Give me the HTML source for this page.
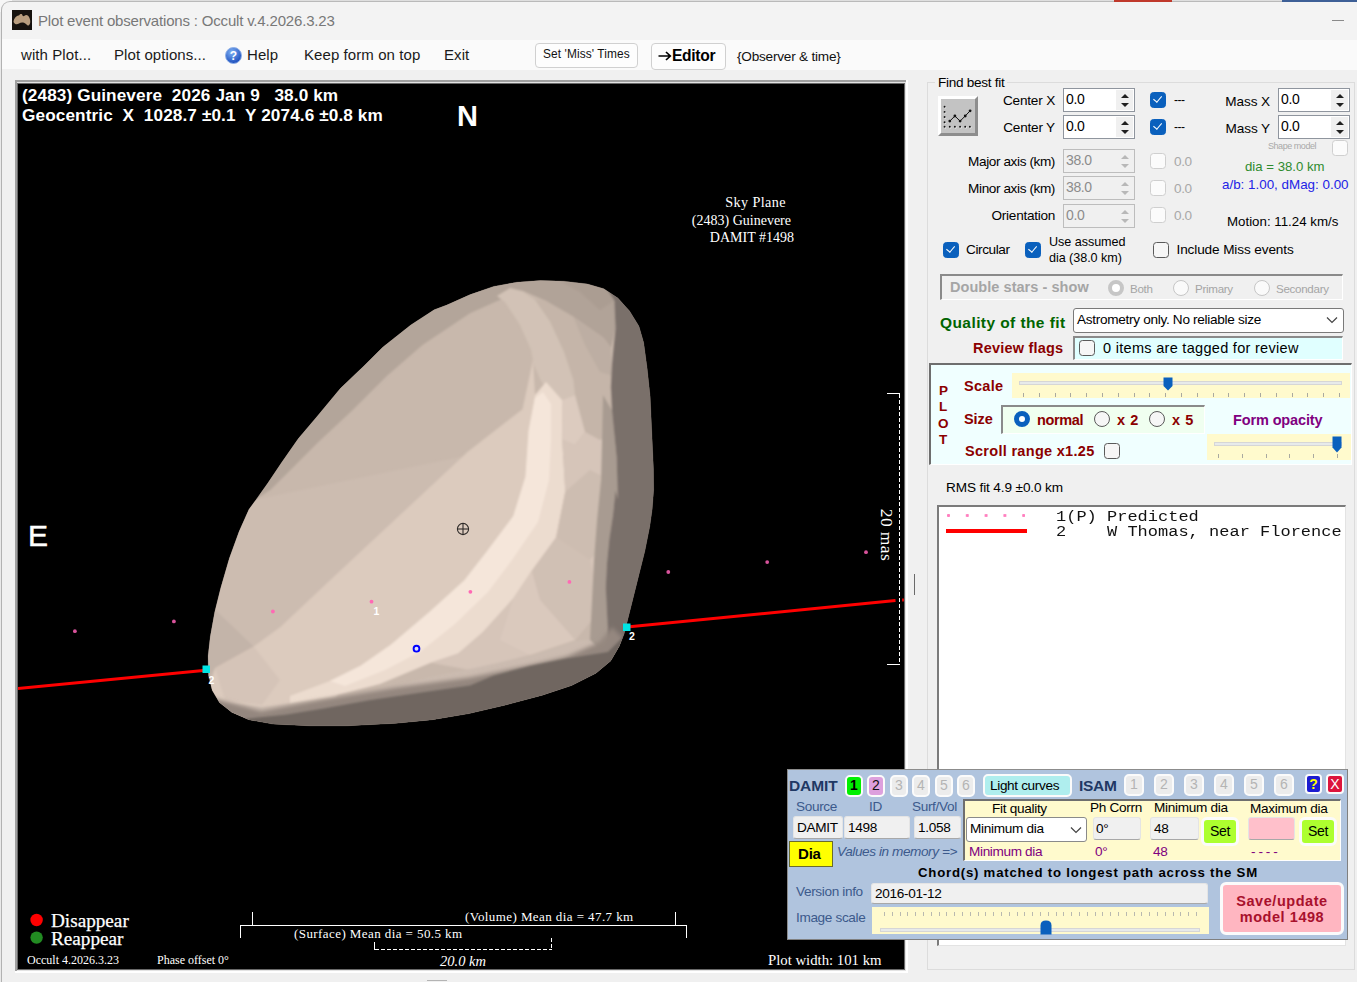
<!DOCTYPE html>
<html>
<head>
<meta charset="utf-8">
<title>Plot event observations</title>
<style>
html,body{margin:0;padding:0;}
body{width:1357px;height:982px;overflow:hidden;position:relative;background:#f0f0f0;font-family:"Liberation Sans",sans-serif;font-size:14px;color:#000;}
.a{position:absolute;white-space:nowrap;}
.t{position:absolute;white-space:nowrap;line-height:1;}
#titlebar{left:0;top:0;width:1357px;height:40px;background:#f3f3f3;}
#menubar{left:0;top:40px;width:1357px;height:30px;background:#fafafa;}
.menu{font-size:15px;color:#1a1a1a;top:47px;letter-spacing:0.08px;}
#plot{left:18px;top:84px;width:886px;height:885px;background:#000;overflow:hidden;}
.ser{font-family:"Liberation Serif",serif;color:#fff;}
.spin{background:#fff;border:1px solid #7a7a7a;box-sizing:border-box;height:24px;}
.spin.dis{background:#f0f0f0;border-color:#c4c4c4;color:#8a8a8a;}
.cb{width:13px;height:13px;border:1px solid #444;border-radius:3px;background:#fff;box-sizing:content-box;}
.cb.on{background:#0a5fb8;border-color:#0a5fb8;}
.cb.dis{border-color:#c8c8c8;background:#fafafa;}
.lbl{font-size:14px;letter-spacing:-0.3px;}
</style>
</head>
<body>
<!-- ===== window chrome ===== -->
<div class="a" id="titlebar"></div>
<div class="a" id="menubar"></div>
<!-- CHROME-BEGIN -->
<div class="a" style="left:0;top:0;width:1357px;height:2px;background:#b9b9b9;"></div>
<div class="a" style="left:0;top:0;width:1357px;height:1px;background:#dedede;"></div>
<div class="a" style="left:1114px;top:0;width:58px;height:2px;background:#c0392b;"></div>
<div class="a" style="left:1282px;top:0;width:75px;height:2px;background:#3d5f96;"></div>
<div class="a" style="left:0;top:0;width:12px;height:12px;background:#f6f6f6;"></div><div class="a" style="left:0;top:12px;width:2px;height:970px;background:#e9e9e9;"></div>
<div class="a" style="left:1px;top:1px;width:40px;height:990px;box-sizing:border-box;border-left:1.5px solid #b2b2b2;border-top:1.5px solid #b9b9b9;border-radius:9px 0 0 0;background:linear-gradient(#f3f3f3 0,#f3f3f3 37.5px,#fafafa 37.5px,#fafafa 67.5px,#f0f0f0 67.5px);"></div>
<!-- app icon -->
<svg class="a" style="left:12px;top:10px;" width="20" height="20" viewBox="0 0 20 20"><rect width="20" height="20" fill="#16120e"/><path d="M1.5 12 C2 8 4.5 5.5 7 5.5 C8.5 3.5 10 3.8 10.5 5.5 C11 6.5 11.8 6.5 12.5 5.8 C14 4.2 16.5 5 17.5 8 C18.8 11 18.5 14.5 16.5 15.5 C15 15.8 14 13.5 12 12.8 C10 12 8.5 12.5 7 13.5 C5 14.8 3 14.8 1.5 12 Z" fill="#b89d7e"/></svg>
<div class="t" style="left:38px;top:13px;font-size:15px;color:#787878;letter-spacing:-0.18px;">Plot event observations : Occult v.4.2026.3.23</div>
<div class="a" style="left:1332px;top:20px;width:12px;height:1px;background:#8a8a8a;"></div>
<!-- menu -->
<div class="t menu" style="left:21px;">with Plot...</div>
<div class="t menu" style="left:114px;">Plot options...</div>
<svg class="a" style="left:225px;top:47px;" width="17" height="17" viewBox="0 0 17 17"><defs><radialGradient id="hg" cx="40%" cy="30%" r="75%"><stop offset="0" stop-color="#7fb2f5"/><stop offset="1" stop-color="#1546b8"/></radialGradient></defs><circle cx="8.5" cy="8.5" r="8" fill="url(#hg)" stroke="#8fb0e8" stroke-width="1"/><text x="8.5" y="12.8" font-family="Liberation Sans" font-weight="bold" font-size="12" fill="#fff" text-anchor="middle">?</text></svg>
<div class="t menu" style="left:247px;">Help</div>
<div class="t menu" style="left:304px;">Keep form on top</div>
<div class="t menu" style="left:444px;">Exit</div>
<!-- buttons -->
<div class="a" style="left:535px;top:43px;width:101px;height:23px;border:1px solid #d0d0d0;border-radius:4px;background:#fdfdfd;box-sizing:content-box;"></div>
<div class="t" style="left:543px;top:49px;font-size:11.9px;color:#111;letter-spacing:0.1px;">Set 'Miss' Times</div>
<div class="a" style="left:651px;top:43px;width:73px;height:25px;border:1px solid #d0d0d0;border-radius:4px;background:#fdfdfd;box-sizing:content-box;"></div>
<svg class="a" style="left:658px;top:50px;" width="14" height="12" viewBox="0 0 14 12"><path d="M0.5 6 H12 M8 2 L12.3 6 L8 10" stroke="#000" stroke-width="1.7" fill="none"/></svg><div class="t" style="left:672px;top:48px;font-size:15.6px;font-weight:bold;color:#000;letter-spacing:-0.3px;">Editor</div>
<div class="t" style="left:737px;top:50px;font-size:13.6px;color:#111;letter-spacing:-0.22px;">{Observer &amp; time}</div>
<div class="a" style="left:427px;top:980px;width:20px;height:1px;background:#b4b4b4;"></div>
<!-- CHROME-END -->
<!-- ===== plot ===== -->
<div class="a" style="left:15px;top:80px;width:893px;height:893px;background:#fff;"></div>
<div class="a" style="left:15px;top:80px;width:891px;height:891px;background:#a0a0a0;"></div>
<div class="a" style="left:17px;top:82px;width:889px;height:889px;background:#e3e3e3;"></div>
<div class="a" style="left:17px;top:83px;width:888px;height:887px;background:#696969;"></div>
<div class="a" id="plot">
<!-- PLOT-BEGIN -->
<svg class="a" style="left:-18px;top:-84px;" width="1357" height="982" viewBox="0 0 1357 982">
<defs>
<clipPath id="ast"><path d="M540.5 280.5 L563.9 281.2 L587.4 284 L603.7 288.7 L617.8 298.1 L629.5 311 L638.9 326.2 L643.6 342.6 L647.1 368.4 L650.1 396.5 L651.8 433.9 L653.4 469 L653.6 490 L652.1 509.5 L649.7 526.6 L644.8 551.1 L638.7 575.5 L632.6 599.9 L627.7 619.5 L624 634.1 L619.1 646.4 L610.6 661 L595.9 673.2 L571.5 685.5 L542.2 695.2 L505.5 705 L468.9 713.6 L432.2 719.7 L395.5 723.3 L346.6 725.8 L309.9 725.8 L273.3 724.1 L248.9 719.7 L231.8 712.3 L219.5 702.6 L212.2 690.3 L208.6 675.7 L208.1 656.1 L210.3 636.6 L214.7 612.2 L220.8 587.7 L229.3 558.4 L239.1 531.5 L248.9 509.5 L256.2 499.5 L267.9 483.1 L282 462 L298.4 438.6 L317.1 416.4 L340.5 388.3 L363.9 366 L382.7 347.3 L410.8 325 L434.2 309.8 L446.8 305.1 L470.3 294.6 L493.7 286.4 L517.1 282.2 Z"/></clipPath>
<filter id="bl" x="-5%" y="-5%" width="110%" height="110%"><feGaussianBlur stdDeviation="0.9"/></filter>
<filter id="bl2" x="-5%" y="-5%" width="110%" height="110%"><feGaussianBlur stdDeviation="2.2"/></filter>
</defs>
<!-- asteroid -->
<path d="M540.5 280.5 L563.9 281.2 L587.4 284 L603.7 288.7 L617.8 298.1 L629.5 311 L638.9 326.2 L643.6 342.6 L647.1 368.4 L650.1 396.5 L651.8 433.9 L653.4 469 L653.6 490 L652.1 509.5 L649.7 526.6 L644.8 551.1 L638.7 575.5 L632.6 599.9 L627.7 619.5 L624 634.1 L619.1 646.4 L610.6 661 L595.9 673.2 L571.5 685.5 L542.2 695.2 L505.5 705 L468.9 713.6 L432.2 719.7 L395.5 723.3 L346.6 725.8 L309.9 725.8 L273.3 724.1 L248.9 719.7 L231.8 712.3 L219.5 702.6 L212.2 690.3 L208.6 675.7 L208.1 656.1 L210.3 636.6 L214.7 612.2 L220.8 587.7 L229.3 558.4 L239.1 531.5 L248.9 509.5 L256.2 499.5 L267.9 483.1 L282 462 L298.4 438.6 L317.1 416.4 L340.5 388.3 L363.9 366 L382.7 347.3 L410.8 325 L434.2 309.8 L446.8 305.1 L470.3 294.6 L493.7 286.4 L517.1 282.2 Z" fill="#c8b8ac" stroke="#5a524c" stroke-width="1" stroke-opacity="0.5"/>
<g clip-path="url(#ast)">
 <g filter="url(#bl)">
  <!-- upper-left edge strip -->
  <polygon points="200,520 256,499 270.3,490 293.7,466.7 317.1,443.3 352.2,410.5 387.4,375.4 422.5,345 470,313.3 520,291 560,286 560,270 200,270" fill="#b3a59a"/>
  <!-- slightly lighter lower part of main facet -->
  <polygon points="200,512 256,499.5 470,455 522,410 467.5,451.9 421.7,494.7 375.8,537.5 330,580.3 280.6,626.8 253.7,646.4 200,660" fill="#ccbcb0"/>
  <!-- top-right medium area R1 -->
  <polygon points="500,290 517,283 540.5,279 587.4,282 606,286 614.3,300.4 615.5,328.5 611,348 603.7,337.9 573.3,316.8 545.2,300.4 521,290" fill="#b1a398"/>
  <polygon points="560,281 587.4,282 606,286 614.3,300.4 600,310 580,292" fill="#ab9d92"/>
  <!-- R2 -->
  <polygon points="535,300 545.2,300.4 573.3,316.8 603.7,337.9 611,348 612,375.4 611,395 614.3,433.9 600,440 585,432 575,395 573.3,380 564,352 550,321.5" fill="#c5b5a9"/>
  <polygon points="573.3,316.8 603.7,337.9 611,348 612,375.4 600,372 585,345" fill="#bdaea3"/>
  <!-- R3 ridge -->
  <polygon points="497,296 510,288 521.8,291 535,300 550,321.5 564,352 573.3,380 575,395 562,400 548,392 540.5,380 533.5,363.7 531,349.6 520,325 505,302" fill="#d2c2b6"/>
  <!-- light band -->
  <polygon points="522.5,409.2 467.5,451.9 421.7,494.7 375.8,537.5 330,580.3 280.6,626.8 253.7,646.4 215,668 205,700 260,720 330,705 360.6,665.8 391.1,644.4 430.8,610.8 464.4,580.3 485.8,552.8 513.3,516.1 525.5,476.4 528.6,430.6 535,395 533,360" fill="#dccbbe"/>
  <!-- lightest band (outer, softer) -->
  <polygon points="546,382 562,400 562.2,439.7 565.3,491.7 556.1,537.5 531.7,571.1 513.3,598.6 482.8,632.2 458.3,653.6 430.8,662.8 380,684 330,697 290,703 290,696 330,681.1 360.6,665.8 391.1,644.4 430.8,610.8 464.4,580.3 485.8,552.8 513.3,516.1 525.5,476.4 528.6,430.6 535,395" fill="#ecdccf"/>
  <!-- core -->
  <polygon points="543,392 551,404 551,440 549,480 538,522 512,560 488,592 455,624 420,652 385,670 345,686 330,681.1 360.6,665.8 391.1,644.4 430.8,610.8 464.4,580.3 485.8,552.8 513.3,516.1 525.5,476.4 528.6,430.6 535,398" fill="#f5e6da"/>
  <polygon points="562,400 575,395 585,432 575,445 562.2,439.7" fill="#dccbbf"/>
  <!-- right of lightest -->
  <polygon points="562.2,439.7 565.3,491.7 556.1,537.5 531.7,571.1 513.3,598.6 482.8,632.2 458.3,653.6 430.8,662.8 470,670 530,655 575,640 600,610 606,565 609,538 613,514 615.5,490 616.6,457.4 614.3,433.9 600,440 585,432 575,445" fill="#d6c5b9"/>
  <polygon points="565.3,491.7 590,470 610,480 609,538 590,560 556.1,537.5" fill="#cdbdb1"/>
  <polygon points="531.7,571.1 556.1,537.5 590,560 600,610 575,640 540,600" fill="#d0c0b4"/>
  <polygon points="513.3,598.6 531.7,571.1 540,600 575,640 530,655 500,640" fill="#dac9bd"/>
  <!-- strip before the dark facet -->
  <polygon points="603,395 612,410.5 614.3,433.9 616.6,457.4 617.8,499.5 615.5,490 613,514.4 609.3,538.9 606.9,563.3 605.7,587.7 606.9,612.2 608.1,636.6 600,650 590,640 592,600 594,560 597,520 601,480 602,440" fill="#a89b91"/>
  <!-- dark right facet -->
  <polygon points="606,287.6 614.3,300.4 615.5,328.5 612,363.7 610.8,387.1 612,410.5 614.3,433.9 616.6,457.4 617.8,499.5 615.5,490 613,514.4 609.3,538.9 606.9,563.3 605.7,587.7 606.9,612.2 608.1,636.6 606.9,656.1 620,670 670,640 670,280" fill="#7a706a"/>
  <!-- lower-left corner facets -->
  <polygon points="205,600 253.7,646.4 215,668 200,690" fill="#c3b4a9"/>
  <polygon points="215,668 253.7,646.4 280,680 262,705 225,700" fill="#d5c4b8"/>
  <polygon points="225,703 262,707 330,699 380,690 430.8,677 470,669 530,656 575,641 590,640 600,650 560,668 500,680 440,690 380,702 320,712 260,722 230,715" fill="#cbbbb0"/>
 </g>
 <g filter="url(#bl2)">
  <!-- bottom medium band -->
  <polygon points="205,696 261.1,711 322.2,699.5 395.5,687.5 470,677.5 530,665 566.6,656.6 600,642 612,627 625,640 600,690 400,740 200,740" fill="#94877f"/>
 </g>
 <g filter="url(#bl)">
  <!-- bottom dark -->
  <polygon points="225,722 248.9,718.4 285.5,714.8 322.2,708.7 371,700.1 419.9,692.8 470,685.5 493.3,675.7 530,666 566.6,658.6 608,652 640,620 660,700 400,740 220,740" fill="#6f6660"/>
 </g>
</g>
</svg>
<!-- PLOT2-BEGIN -->
<svg class="a" style="left:-18px;top:-84px;" width="1357" height="982" viewBox="0 0 1357 982">
<!-- chord 2 -->
<line x1="17" y1="688.6" x2="206" y2="670.2" stroke="#f00" stroke-width="3"/>
<line x1="627" y1="627" x2="895.5" y2="600.6" stroke="#f00" stroke-width="3"/>
<rect x="902" y="598.5" width="3" height="3" fill="#d00000"/>
<rect x="202.5" y="665.5" width="7.5" height="7.5" fill="#00e5e5"/>
<rect x="623" y="623.5" width="7.5" height="7.5" fill="#00e5e5"/>
<!-- predicted dots -->
<g fill="#d9539c">
<circle cx="74.9" cy="631.2" r="1.9"/><circle cx="173.9" cy="621.4" r="1.9"/>
<circle cx="668.3" cy="572" r="1.9"/><circle cx="767.2" cy="562.1" r="1.9"/><circle cx="866" cy="552.2" r="1.9"/>
</g>
<g fill="#ff69b4">
<circle cx="272.9" cy="611.5" r="1.9"/><circle cx="371.5" cy="601.7" r="1.9"/><circle cx="470.4" cy="591.8" r="1.9"/><circle cx="569.4" cy="581.9" r="1.9"/>
</g>
<!-- centre cross -->
<g stroke="#2e2a28" stroke-width="1.1" fill="none"><circle cx="463" cy="529" r="5.6"/><line x1="457" y1="529" x2="469" y2="529"/><line x1="463" y1="523" x2="463" y2="535"/></g>
<!-- blue circle -->
<circle cx="416.5" cy="648.7" r="2.9" fill="#dfe0ff" stroke="#0000ff" stroke-width="1.9"/>
<!-- 20 mas bar -->
<g stroke="#fff" stroke-width="1" fill="none" shape-rendering="crispEdges">
<line x1="887" y1="393.5" x2="900" y2="393.5"/><line x1="887" y1="664.5" x2="900" y2="664.5"/>
<line x1="899.5" y1="394" x2="899.5" y2="664" stroke-dasharray="4 2"/>
<!-- bottom brackets -->
<line x1="240" y1="925.5" x2="687" y2="925.5"/>
<line x1="240.5" y1="925" x2="240.5" y2="938"/><line x1="686.5" y1="925" x2="686.5" y2="938"/>
<line x1="252.5" y1="912" x2="252.5" y2="925"/><line x1="675.5" y1="912" x2="675.5" y2="925"/>
<line x1="374.5" y1="949.5" x2="552" y2="949.5" stroke-dasharray="4 2"/>
<line x1="374.5" y1="942" x2="374.5" y2="950"/><line x1="551.5" y1="938" x2="551.5" y2="950" stroke-dasharray="4 2"/>
</g>
<circle cx="36.6" cy="920" r="6.2" fill="#f00"/>
<circle cx="36.6" cy="937.6" r="6.2" fill="#228b22"/>
</svg>
<!-- texts: coordinates are plot-local (source minus 18,84) -->
<div class="t" style="left:4px;top:3px;font-size:17.2px;font-weight:bold;color:#fff;letter-spacing:0.1px;white-space:pre;">(2483) Guinevere  2026 Jan 9   38.0 km</div>
<div class="t" style="left:4px;top:23px;font-size:17.2px;font-weight:bold;color:#fff;letter-spacing:0.1px;white-space:pre;">Geocentric  X  1028.7 &#177;0.1  Y 2074.6 &#177;0.8 km</div>
<div class="t" style="left:439px;top:18px;font-size:29px;font-weight:bold;color:#fff;">N</div>
<div class="t" style="left:10px;top:437px;font-size:30px;color:#fff;-webkit-text-stroke:0.5px #fff;">E</div>
<div class="t ser" style="right:118px;top:111px;font-size:14.2px;letter-spacing:0.4px;">Sky Plane</div>
<div class="t ser" style="right:113px;top:130px;font-size:14px;">(2483) Guinevere</div>
<div class="t ser" style="right:110px;top:147px;font-size:14px;">DAMIT #1498</div>
<div class="t ser" style="left:867.5px;top:451px;font-size:17.5px;letter-spacing:0.4px;transform:translate(-50%,-50%) rotate(90deg);">20 mas</div>
<div class="t" style="left:190.5px;top:591px;font-size:10.5px;font-weight:bold;color:#fff;">2</div>
<div class="t" style="left:611px;top:547px;font-size:10.5px;font-weight:bold;color:#fff;">2</div>
<div class="t" style="left:355.5px;top:522px;font-size:10.5px;font-weight:bold;color:#fff;">1</div>
<div class="t ser" style="left:33px;top:827px;font-size:19.2px;-webkit-text-stroke:0.25px #fff;">Disappear</div>
<div class="t ser" style="left:33px;top:845px;font-size:19.2px;-webkit-text-stroke:0.25px #fff;">Reappear</div>
<div class="t ser" style="left:9px;top:870px;font-size:12px;">Occult 4.2026.3.23</div>
<div class="t ser" style="left:139px;top:870px;font-size:12px;">Phase offset 0&#176;</div>
<div class="t ser" style="left:447px;top:826px;font-size:13px;letter-spacing:0.42px;">(Volume) Mean dia = 47.7 km</div>
<div class="t ser" style="left:276px;top:843px;font-size:13px;letter-spacing:0.42px;">(Surface) Mean dia = 50.5 km</div>
<div class="t ser" style="left:422px;top:870px;font-size:14.5px;font-style:italic;">20.0 km</div>
<div class="t ser" style="left:750px;top:869px;font-size:14.75px;">Plot width: 101 km</div>
<!-- PLOT2-END -->
<!-- PLOT-END -->
</div>
<!-- ===== right panel ===== -->
<!-- RIGHT-BEGIN -->
<style>
.gl{font-size:13.6px;letter-spacing:-0.4px;color:#000;}
.sb{position:absolute;box-sizing:border-box;height:24px;width:72px;background:#fff;border:1px solid #8f959e;}
.sb.dis{background:#f0f0f0;border-color:#bdbdbd;}
.sb .v{position:absolute;left:2px;top:3px;font-size:14px;letter-spacing:-0.4px;line-height:1;}
.sb.dis .v{color:#8c8c8c;}
.sb .ud{position:absolute;right:1px;top:1px;width:17px;height:20px;background:#f0f0f0;}
.sb .ud:before,.sb .ud:after{content:"";position:absolute;left:4.5px;border-left:4px solid transparent;border-right:4px solid transparent;}
.sb .ud:before{top:4px;border-bottom:4px solid #202020;}
.sb .ud:after{top:13px;border-top:4px solid #202020;}
.sb.dis .ud:before{border-bottom-color:#b8b8b8;}
.sb.dis .ud:after{border-top-color:#b8b8b8;}
.ck{position:absolute;box-sizing:border-box;width:16px;height:16px;border:1px solid #5a5a5a;border-radius:3.5px;background:#f6f6f6;}
.ck.on{background:#0a60bd;border-color:#0a60bd;}
.ck.on:after{content:"";position:absolute;left:4.3px;top:1.3px;width:3.6px;height:7.4px;border:solid #fff;border-width:0 1.6px 1.6px 0;transform:rotate(40deg);}
.ck.dis{border-color:#cfcfcf;background:#fbfbfb;}
.rd{position:absolute;box-sizing:border-box;width:16px;height:16px;border:1px solid #5a5a5a;border-radius:50%;background:#f6f6f6;}
.rd.on{border:5px solid #0a60bd;background:#fff;}
.rd.dis{border-color:#c6c6c6;background:#fafafa;}
.rd.dis.on{border:4.5px solid #c6c6c6;background:#fff;}
.dr{font-weight:bold;color:#8b0000;font-size:14.5px;letter-spacing:-0.35px;}
</style>
<!-- outer group -->
<div class="a" style="left:927px;top:82px;width:428px;height:888px;box-sizing:border-box;border:1px solid #dcdcdc;"></div>
<div class="t gl" style="left:935px;top:76px;background:#f0f0f0;padding:0 3px;font-size:13.6px;letter-spacing:-0.3px;">Find best fit</div>
<!-- fit button -->
<div class="a" style="left:938px;top:96px;width:40px;height:40px;box-sizing:border-box;background:#c3c3c3;border-top:3px solid #fff;border-left:3px solid #fff;border-right:3px solid #8d8d8d;border-bottom:3px solid #8d8d8d;"></div>
<svg class="a" style="left:938px;top:96px;" width="40" height="40" viewBox="0 0 40 40"><g fill="#fff" opacity="0.8"><circle cx="7.3" cy="11.4" r="0.9"/><circle cx="7.3" cy="16.6" r="0.9"/><circle cx="7.3" cy="21.7" r="0.9"/><circle cx="7.3" cy="26.9" r="0.9"/><circle cx="7.3" cy="31.5" r="0.9"/><circle cx="12.5" cy="31.5" r="0.9"/><circle cx="17.6" cy="31.5" r="0.9"/><circle cx="22.8" cy="31.5" r="0.9"/><circle cx="27.9" cy="31.5" r="0.9"/><circle cx="32.6" cy="31.5" r="0.9"/></g><g fill="#111"><circle cx="6.6" cy="10.7" r="0.95"/><circle cx="6.6" cy="15.9" r="0.95"/><circle cx="6.6" cy="21" r="0.95"/><circle cx="6.6" cy="26.2" r="0.95"/><circle cx="6.6" cy="30.8" r="0.95"/><circle cx="11.8" cy="30.8" r="0.95"/><circle cx="16.9" cy="30.8" r="0.95"/><circle cx="22.1" cy="30.8" r="0.95"/><circle cx="27.2" cy="30.8" r="0.95"/><circle cx="31.9" cy="30.8" r="0.95"/><circle cx="11.8" cy="25.1" r="1.4"/><circle cx="16.9" cy="20" r="1.4"/><circle cx="22.1" cy="25.1" r="1.4"/><circle cx="27.2" cy="20" r="1.4"/><circle cx="32.1" cy="14.8" r="1.4"/></g><path d="M11.8 25.1 L16.9 20 L22.1 25.1 L27.2 20 L32.1 14.8" stroke="#111" stroke-width="1" fill="none"/></svg>
<!-- rows -->
<div class="t gl" style="right:302px;top:94px;letter-spacing:-0.2px;">Center X</div>
<div class="t gl" style="right:302px;top:121px;letter-spacing:-0.2px;">Center Y</div>
<div class="t gl" style="right:302px;top:155px;">Major axis (km)</div>
<div class="t gl" style="right:302px;top:182px;">Minor axis (km)</div>
<div class="t gl" style="right:302px;top:209px;letter-spacing:-0.28px;">Orientation</div>
<div class="sb" style="left:1063px;top:88px;"><span class="v">0.0</span><span class="ud"></span></div>
<div class="sb" style="left:1063px;top:115px;"><span class="v">0.0</span><span class="ud"></span></div>
<div class="sb dis" style="left:1063px;top:149px;"><span class="v">38.0</span><span class="ud"></span></div>
<div class="sb dis" style="left:1063px;top:176px;"><span class="v">38.0</span><span class="ud"></span></div>
<div class="sb dis" style="left:1063px;top:204px;"><span class="v">0.0</span><span class="ud"></span></div>
<div class="ck on" style="left:1150px;top:92px;"></div>
<div class="ck on" style="left:1150px;top:119px;"></div>
<div class="t" style="left:1174px;top:94px;font-size:12px;letter-spacing:-0.5px;">---</div>
<div class="t" style="left:1174px;top:121px;font-size:12px;letter-spacing:-0.5px;">---</div>
<div class="ck dis" style="left:1150px;top:153px;"></div>
<div class="ck dis" style="left:1150px;top:180px;"></div>
<div class="ck dis" style="left:1150px;top:207px;"></div>
<div class="t gl" style="left:1174px;top:155px;color:#a8a8a8;">0.0</div>
<div class="t gl" style="left:1174px;top:182px;color:#a8a8a8;">0.0</div>
<div class="t gl" style="left:1174px;top:209px;color:#a8a8a8;">0.0</div>
<div class="t gl" style="right:87px;top:95px;font-size:13.6px;letter-spacing:-0.1px;">Mass X</div>
<div class="t gl" style="right:87px;top:122px;font-size:13.6px;letter-spacing:-0.1px;">Mass Y</div>
<div class="sb" style="left:1278px;top:88px;"><span class="v">0.0</span><span class="ud"></span></div>
<div class="sb" style="left:1278px;top:115px;"><span class="v">0.0</span><span class="ud"></span></div>
<div class="t" style="left:1268px;top:142px;font-size:9px;letter-spacing:-0.45px;color:#a9a9a9;">Shape model</div>
<div class="ck dis" style="left:1332px;top:140px;"></div>
<div class="t" style="left:1245px;top:160px;font-size:13.2px;letter-spacing:0;color:#2e8b2e;">dia = 38.0 km</div>
<div class="t" style="left:1222px;top:178px;font-size:13.4px;letter-spacing:0;color:#2222e6;">a/b: 1.00, dMag: 0.00</div>
<div class="t" style="left:1227px;top:215px;font-size:13.3px;letter-spacing:0;">Motion: 11.24 km/s</div>
<div class="ck on" style="left:943px;top:242px;"></div>
<div class="t gl" style="left:966px;top:243px;">Circular</div>
<div class="ck on" style="left:1025px;top:242px;"></div>
<div class="t" style="left:1049px;top:236px;font-size:12.6px;letter-spacing:-0.05px;">Use assumed</div>
<div class="t" style="left:1049px;top:252px;font-size:12.6px;letter-spacing:-0.05px;">dia (38.0 km)</div>
<div class="ck" style="left:1153px;top:242px;"></div>
<div class="t gl" style="left:1176.5px;top:243px;letter-spacing:-0.12px;">Include Miss events</div>
<!-- double stars -->
<div class="a" style="left:940px;top:274px;width:403px;height:26px;box-sizing:border-box;border-top:2px solid #8a8a8a;border-left:2px solid #8a8a8a;border-right:1px solid #fff;border-bottom:1px solid #fff;"></div>
<div class="t" style="left:950px;top:280px;font-size:14.5px;font-weight:bold;letter-spacing:0.05px;color:#a5a5a5;">Double stars - show</div>
<div class="rd dis on" style="left:1108px;top:280px;"></div>
<div class="t" style="left:1130px;top:283px;font-size:11.6px;letter-spacing:-0.3px;color:#a5a5a5;">Both</div>
<div class="rd dis" style="left:1173px;top:280px;"></div>
<div class="t" style="left:1195px;top:283px;font-size:11.6px;letter-spacing:-0.3px;color:#a5a5a5;">Primary</div>
<div class="rd dis" style="left:1254px;top:280px;"></div>
<div class="t" style="left:1276px;top:283px;font-size:11.6px;letter-spacing:-0.3px;color:#a5a5a5;">Secondary</div>
<!-- quality -->
<div class="t" style="left:940px;top:315px;font-size:15.5px;font-weight:bold;letter-spacing:0.42px;color:#006400;">Quality of the fit</div>
<div class="a" style="left:1073px;top:308px;width:271px;height:25px;box-sizing:border-box;background:#fff;border:1px solid #7a7a7a;border-radius:3px;"></div>
<div class="t gl" style="left:1077px;top:313px;letter-spacing:-0.3px;">Astrometry only. No reliable size</div>
<svg class="a" style="left:1326px;top:316px;" width="12" height="8" viewBox="0 0 12 8"><path d="M1 1.5 L6 6.5 L11 1.5" stroke="#444" stroke-width="1.2" fill="none"/></svg>
<div class="t dr" style="left:973px;top:341px;letter-spacing:0.2px;">Review flags</div>
<div class="a" style="left:1073px;top:336px;width:270px;height:24px;box-sizing:border-box;background:#e0ffff;border-top:2px solid #8a8a8a;border-left:2px solid #8a8a8a;border-right:1px solid #fff;border-bottom:1px solid #fff;"></div>
<div class="ck" style="left:1079px;top:340px;"></div>
<div class="t" style="left:1103px;top:341px;font-size:14.5px;letter-spacing:0.3px;">0 items are tagged for review</div>
<!-- PLOT panel -->
<div class="a" style="left:929px;top:363px;width:423px;height:102px;box-sizing:border-box;background:#f0ffff;border-top:2px solid #6e6e6e;border-left:2px solid #6e6e6e;border-right:1px solid #fff;border-bottom:1px solid #fff;"></div>
<div class="t dr" style="left:939px;top:384px;font-size:13.5px;">P</div>
<div class="t dr" style="left:939px;top:400px;font-size:13.5px;">L</div>
<div class="t dr" style="left:938px;top:417px;font-size:13.5px;">O</div>
<div class="t dr" style="left:939px;top:433px;font-size:13.5px;">T</div>
<div class="t dr" style="left:964px;top:379px;letter-spacing:0.3px;">Scale</div>
<div class="a" style="left:1012px;top:373px;width:338px;height:25px;background:#fffacd;"></div>
<div class="a" style="left:1019px;top:381px;width:323px;height:4px;background:#e7eaea;border:1px solid #d6d6d6;box-sizing:border-box;"></div>
<div class="a" id="sct" style="left:1023px;top:393px;width:318px;height:4px;background:repeating-linear-gradient(90deg,#a9a9a0 0,#a9a9a0 1px,transparent 1px,transparent 15.8px);"></div>
<svg class="a" style="left:1163px;top:377px;" width="10" height="14" viewBox="0 0 10 14"><path d="M0.5 0.5 H9.5 V9 L5 13.5 L0.5 9 Z" fill="#0a60bd"/></svg>
<div class="t dr" style="left:964px;top:412px;letter-spacing:-0.1px;">Size</div>
<div class="a" style="left:1001px;top:405px;width:204px;height:29px;box-sizing:border-box;background:#f0fff0;border-top:2px solid #8a8a8a;border-left:2px solid #8a8a8a;border-right:1px solid #fff;border-bottom:1px solid #fff;"></div>
<div class="rd on" style="left:1014px;top:411px;"></div>
<div class="t dr" style="left:1037px;top:413px;">normal</div>
<div class="rd" style="left:1094px;top:411px;"></div>
<div class="t dr" style="left:1117px;top:413px;letter-spacing:0.6px;">x 2</div>
<div class="rd" style="left:1149px;top:411px;"></div>
<div class="t dr" style="left:1172px;top:413px;letter-spacing:0.6px;">x 5</div>
<div class="t" style="left:1233px;top:413px;font-size:14.5px;font-weight:bold;letter-spacing:-0.13px;color:#800080;">Form opacity</div>
<div class="a" style="left:1207px;top:434px;width:144px;height:26px;background:#fffacd;"></div>
<div class="a" style="left:1214px;top:442px;width:128px;height:4px;background:#e7eaea;border:1px solid #d6d6d6;box-sizing:border-box;"></div>
<div class="a" style="left:1218px;top:454px;width:120px;height:4px;background:repeating-linear-gradient(90deg,#a9a9a0 0,#a9a9a0 1px,transparent 1px,transparent 23.8px);"></div>
<svg class="a" style="left:1332px;top:436px;" width="10" height="17" viewBox="0 0 10 17"><path d="M0.5 0.5 H9.5 V11.5 L5 16.5 L0.5 11.5 Z" fill="#0a60bd"/></svg>
<div class="t dr" style="left:965px;top:444px;letter-spacing:0.3px;">Scroll range x1.25</div>
<div class="ck" style="left:1104px;top:443px;"></div>
<!-- RMS + list -->
<div class="t" style="left:946px;top:481px;font-size:13.6px;letter-spacing:-0.12px;">RMS fit 4.9 &#177;0.0 km</div>
<div class="a" style="left:937px;top:505px;width:409px;height:441px;box-sizing:border-box;background:#fff;border-top:2px solid #7b7b7b;border-left:2px solid #7b7b7b;border-right:1px solid #e3e3e3;border-bottom:1px solid #e3e3e3;"></div>
<div class="a" style="left:947px;top:514px;width:78px;height:3px;background:radial-gradient(circle at 1.5px 1.5px,#ff7fbf 0,#ff7fbf 1.3px,transparent 1.8px);background-size:18.8px 3px;"></div>
<div class="a" style="left:946px;top:529px;width:81px;height:4px;background:#f00;"></div>
<div class="t" style="left:1056px;top:509px;font-family:'Liberation Mono',monospace;font-size:17px;color:#111;transform:scaleY(0.82);transform-origin:0 50%;">1(P) Predicted</div>
<div class="t" style="left:1056px;top:524px;font-family:'Liberation Mono',monospace;font-size:17px;color:#111;transform:scaleY(0.82);transform-origin:0 50%;white-space:pre;">2    W Thomas, near Florence</div>
<!-- splitter handle -->
<div class="a" style="left:914px;top:574px;width:1px;height:21px;background:#6a6a6a;"></div>
<!-- RIGHT-END -->
<!-- ===== damit panel ===== -->
<!-- DAMIT-BEGIN -->
<style>
.nb{position:absolute;box-sizing:border-box;border:2.5px solid #fbfbfb;border-radius:5px;text-align:center;font-size:14px;line-height:17px;height:22px;width:18px;background:#ececec;color:#b4b4b4;}
.sbl{color:#3c5a8c;font-size:13.6px;letter-spacing:-0.35px;}
.tb{position:absolute;box-sizing:border-box;background:#f0f0f0;border:1px solid #e4e4e4;border-bottom:1px solid #a8a8a8;border-radius:3px;height:23px;}
.tbt{font-size:13.6px;letter-spacing:-0.3px;color:#000;}
.pur{color:#800080;font-size:13.6px;letter-spacing:-0.35px;}
</style>
<div class="a" style="left:787px;top:769px;width:561px;height:171px;box-sizing:border-box;background:#b0c4de;border:1px solid #8c8c8c;border-right:1.5px solid #808080;border-bottom:1.5px solid #808080;"></div>
<div class="t" style="left:789px;top:778px;font-size:15.5px;font-weight:bold;color:#1f3864;letter-spacing:-0.1px;">DAMIT</div>
<div class="nb" style="left:845px;top:775px;background:#00f000;color:#000;font-weight:bold;">1</div>
<div class="nb" style="left:867px;top:775px;background:#dda0dd;color:#111;">2</div>
<div class="nb" style="left:890px;top:775px;">3</div>
<div class="nb" style="left:912px;top:775px;">4</div>
<div class="nb" style="left:935px;top:775px;">5</div>
<div class="nb" style="left:957px;top:775px;">6</div>
<div class="a" style="left:983px;top:774px;width:89px;height:23px;box-sizing:border-box;border:2.5px solid #fbfbfb;border-radius:5px;background:#afeeee;"></div>
<div class="t" style="left:990px;top:779px;font-size:13.6px;letter-spacing:-0.35px;color:#000;">Light curves</div>
<div class="t" style="left:1079px;top:778px;font-size:15.5px;font-weight:bold;color:#1f3864;letter-spacing:-0.3px;">ISAM</div>
<div class="nb" style="left:1124px;top:774px;width:20px;">1</div>
<div class="nb" style="left:1154px;top:774px;width:20px;">2</div>
<div class="nb" style="left:1184px;top:774px;width:20px;">3</div>
<div class="nb" style="left:1214px;top:774px;width:20px;">4</div>
<div class="nb" style="left:1244px;top:774px;width:20px;">5</div>
<div class="nb" style="left:1274px;top:774px;width:20px;">6</div>
<div class="a" style="left:1305px;top:774px;width:17px;height:20px;box-sizing:border-box;border:2px solid #fbfbfb;border-radius:4px;background:#1c1cd0;color:#ffff00;font-weight:bold;font-size:14px;line-height:16px;text-align:center;">?</div>
<div class="a" style="left:1326px;top:774px;width:18px;height:20px;box-sizing:border-box;border:2px solid #fbfbfb;border-radius:4px;background:#dc143c;color:#fff;font-size:14px;line-height:16px;text-align:center;">X</div>
<!-- left column -->
<div class="t sbl" style="left:796px;top:800px;">Source</div>
<div class="t sbl" style="left:869px;top:800px;">ID</div>
<div class="t sbl" style="left:912px;top:800px;">Surf/Vol</div>
<div class="tb" style="left:793px;top:816px;width:50px;"></div><div class="t tbt" style="left:797px;top:821px;">DAMIT</div>
<div class="tb" style="left:844px;top:816px;width:66px;"></div><div class="t tbt" style="left:848px;top:821px;">1498</div>
<div class="tb" style="left:914px;top:816px;width:47px;"></div><div class="t tbt" style="left:918px;top:821px;">1.058</div>
<div class="a" style="left:789px;top:841px;width:44px;height:26px;box-sizing:border-box;background:#ffff00;border:1px solid #6b6b2a;"></div>
<div class="t" style="left:798px;top:846px;font-size:15px;font-weight:bold;letter-spacing:-0.2px;">Dia</div>
<div class="t sbl" style="left:837px;top:845px;font-style:italic;letter-spacing:-0.42px;">Values in memory =&gt;</div>
<!-- yellow panel -->
<div class="a" style="left:963px;top:799px;width:378px;height:62px;box-sizing:border-box;background:#fffacd;border-top:2px solid #6e6e6e;border-left:2px solid #6e6e6e;border-right:1px solid #fff;border-bottom:1px solid #fff;"></div>
<div class="t tbt" style="left:992px;top:802px;">Fit quality</div>
<div class="a" style="left:966px;top:817px;width:121px;height:25px;box-sizing:border-box;background:#fff;border:1px solid #8a8a8a;border-radius:3px;"></div>
<div class="t tbt" style="left:970px;top:822px;">Minimum dia</div>
<svg class="a" style="left:1070px;top:826px;" width="12" height="8" viewBox="0 0 12 8"><path d="M1 1.5 L6 6.5 L11 1.5" stroke="#444" stroke-width="1.2" fill="none"/></svg>
<div class="t pur" style="left:969px;top:845px;">Minimum dia</div>
<div class="t tbt" style="left:1090px;top:801px;">Ph Corrn</div>
<div class="tb" style="left:1093px;top:817px;width:48px;"></div><div class="t tbt" style="left:1096px;top:822px;">0&#176;</div>
<div class="t pur" style="left:1095px;top:845px;">0&#176;</div>
<div class="t tbt" style="left:1154px;top:801px;">Minimum dia</div>
<div class="tb" style="left:1150px;top:817px;width:49px;"></div><div class="t tbt" style="left:1154px;top:822px;">48</div>
<div class="t pur" style="left:1153px;top:845px;">48</div>
<div class="a" style="left:1201px;top:817px;width:38px;height:29px;box-sizing:border-box;border:3px solid #fbfbfb;border-radius:6px;background:#adff2f;"></div>
<div class="t tbt" style="left:1210px;top:824px;font-size:14px;">Set</div>
<div class="t tbt" style="left:1250px;top:802px;">Maximum dia</div>
<div class="tb" style="left:1248px;top:817px;width:47px;background:#ffc0cb;"></div>
<div class="a" style="left:1299px;top:817px;width:38px;height:29px;box-sizing:border-box;border:3px solid #fbfbfb;border-radius:6px;background:#adff2f;"></div>
<div class="t tbt" style="left:1308px;top:824px;font-size:14px;">Set</div>
<div class="t pur" style="left:1251px;top:845px;letter-spacing:2.9px;">----</div>
<!-- chord text -->
<div class="t" style="left:918px;top:866px;font-size:13.2px;font-weight:bold;letter-spacing:0.78px;color:#000;">Chord(s) matched to longest path across the SM</div>
<div class="t sbl" style="left:796px;top:885px;">Version info</div>
<div class="tb" style="left:871px;top:883px;width:337px;height:21px;"></div><div class="t tbt" style="left:875px;top:887px;">2016-01-12</div>
<div class="t sbl" style="left:796px;top:911px;">Image scale</div>
<div class="a" style="left:872px;top:907px;width:337px;height:27px;background:#fffacd;"></div>
<div class="a" style="left:884px;top:912px;width:313px;height:4px;background:repeating-linear-gradient(90deg,#b9b9b0 0,#b9b9b0 1px,transparent 1px,transparent 7.8px);"></div>
<div class="a" style="left:880px;top:928px;width:320px;height:4px;background:#e7eaea;border:1px solid #d6d6d6;box-sizing:border-box;"></div>
<svg class="a" style="left:1040px;top:920px;" width="12" height="15" viewBox="0 0 12 15"><path d="M0.5 14.5 V5.5 Q0.5 0.5 6 0.5 Q11.5 0.5 11.5 5.5 V14.5 Z" fill="#0a60bd"/></svg>
<div class="a" style="left:1220px;top:882px;width:124px;height:53px;box-sizing:border-box;border:3px solid #fbfbfb;border-radius:6px;background:#ffb6c1;"></div>
<div class="t" style="left:1220px;top:894px;width:124px;text-align:center;font-size:14.5px;font-weight:bold;letter-spacing:0.55px;color:#a8102c;">Save/update</div>
<div class="t" style="left:1220px;top:910px;width:124px;text-align:center;font-size:14.5px;font-weight:bold;letter-spacing:0.55px;color:#a8102c;">model 1498</div>
<!-- DAMIT-END -->
</body>
</html>
